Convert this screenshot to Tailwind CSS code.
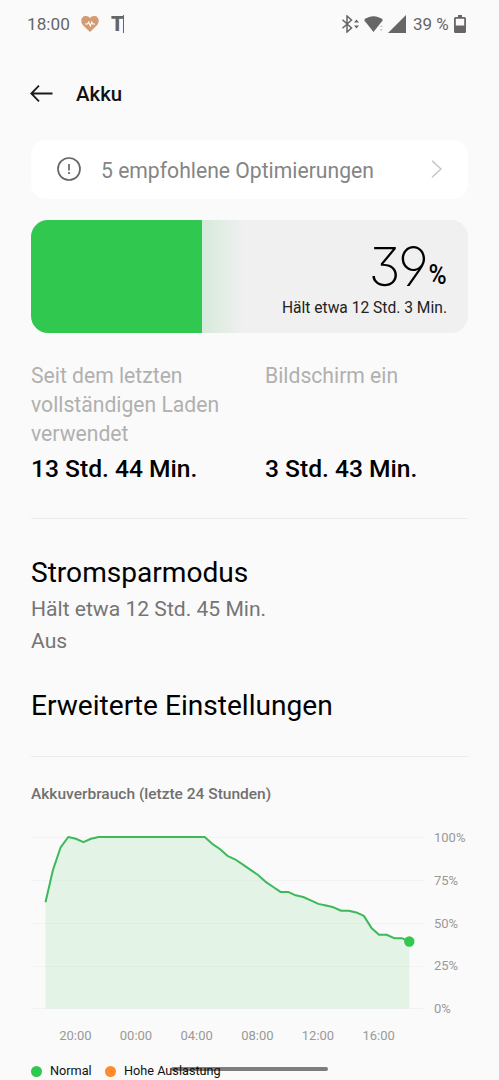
<!DOCTYPE html>
<html lang="de">
<head>
    <meta charset="UTF-8">
    <meta name="viewport" content="width=device-width, initial-scale=1.0">
    <title>Akku</title>
    <script src="https://cdn.jsdelivr.net/npm/@tailwindcss/browser@4"></script>
</head>
<body class="bg-[#fafafa] font-['Roboto',sans-serif] text-black">
<div class="relative w-[499px] h-[1080px] overflow-hidden flex flex-col">

    <!-- Status bar -->
    <header class="h-12 shrink-0 flex items-center pl-[27px] pr-[33px] text-[#666]">
        <span class="text-[17.2px] w-[54px] whitespace-nowrap pt-px">18:00</span>
        <svg class="w-[18px] h-4" viewBox="0 0 18 16">
            <path d="M9 16 2 9.2C-1.5 5 .7 0 4.8 0 6.6 0 8.200.9 9 2.300 9.800.9 11.400 0 13.200 0c4.100 0 6.300 5 2.800 9.200Z" fill="#d49b72"/>
            <path d="M4 8h2.500l1.200-2 1.600 4 1.500-4 .8 2H14" fill="none" stroke="#fff" stroke-width="1.100"/>
        </svg>
        <span class="ml-3 w-[13px] h-[18px] flex items-center border-r border-[#666] text-[20px] font-black leading-none">T</span>
        <div class="ml-auto flex items-center">
            <svg class="w-[19px] h-[18px]" viewBox="0 0 19 18" fill="none" stroke="#666" stroke-width="1.500">
                <path d="m1.500 4.800 9 8.200-4.500 4V1l4.500 4-9 8.200"/>
                <path d="m13 7.500 2.500-3 2.500 3Zm0 3 2.500 3 2.500-3Z" fill="#666" stroke="none"/>
            </svg>
            <svg class="ml-1 w-[20px] h-4" viewBox="0 0 20 16">
                <path d="M0 4C5.500-.9 13.500-.9 19 4L9.500 16Z" fill="#666"/>
                <path d="m15.500 11 1.700-2 1.700 2Zm0 2 1.700 2 1.700-2Z" fill="#ccc"/>
            </svg>
            <svg class="ml-1 w-[18px] h-[18px]" viewBox="0 0 18 18"><path d="M18 0v18H0Z" fill="#666"/></svg>
            <span class="ml-[7px] w-[41px] text-[17px] whitespace-nowrap pt-px">39 %</span>
            <svg class="w-3 h-[18px]" viewBox="0 0 12 18">
                <path d="M4 0h4v2h2.500Q12 2 12 3.500v13q0 1.500-1.500 1.500h-9Q0 18 0 16.500v-13Q0 2 1.500 2H4ZM1.800 3.800v6.700h8.400V3.800Z" fill="#666" fill-rule="evenodd"/>
            </svg>
        </div>
    </header>

    <!-- Title bar -->
    <div class="h-[92px] shrink-0 flex items-center pl-[30px] pb-[2px]">
        <svg class="w-[23px] h-[17px]" viewBox="0 0 23 17" fill="none" stroke="#1a1a1a" stroke-width="1.800">
            <path d="M22.500 8.500H1.300M9 .7 1.300 8.500 9 16.300"/>
        </svg>
        <h1 class="ml-[23px] text-[20.4px] font-medium text-[#111] pt-[3px]">Akku</h1>
    </div>

    <main class="px-[31px] flex flex-col">
        <div class="h-[59px] w-[437px] rounded-[15px] bg-white flex items-center pl-[26px] pr-[26px]">
            <svg class="w-6 h-6 mb-[2px]" viewBox="0 0 24 24" fill="none" stroke="#666" stroke-width="1.700">
                <circle cx="12" cy="12" r="11"/>
                <path d="M12 7v6.500M12 15v2"/>
            </svg>
            <span class="ml-[20px] text-[21.150px] text-[#858585] whitespace-nowrap pt-[2px]">5 empfohlene Optimierungen</span>
            <svg class="ml-auto w-[11px] h-[18px] mb-px" viewBox="0 0 11 18" fill="none" stroke="#c4c4c4" stroke-width="1.500">
                <path d="m1 .8 9 8.200-9 8.200"/>
            </svg>
        </div>

        <!-- Charge level -->
        <div class="mt-[21px] h-[113px] w-[437px] rounded-[17px] overflow-hidden bg-[#f0f0f0] flex">
            <div class="w-[170.500px] bg-[#30c84f]"></div>
            <div class="w-[42px] bg-linear-to-r from-[#d5eada] to-[#f0f0f0]"></div>
            <div class="flex-1 pr-[21px] flex flex-col items-end">
                <div class="mt-[19px] h-[58px] flex items-baseline leading-[56px]">
                    <span class="font-['Inter'] font-extralight text-[54px] tracking-[-2.500px] [font-feature-settings:'cv09','cv04','ss01']">39</span>
                    <span class="font-medium text-[28px] origin-right scale-x-[.88] pb-[2px] -translate-y-[2px]">%</span>
                </div>
                <span class="text-[15.600px] leading-[22px] text-[#222] whitespace-nowrap">Hält etwa 12 Std. 3 Min.</span>
            </div>
        </div>

        <div class="mt-[28px] h-[158px] flex border-b border-[#ececec]">
            <div class="w-[234px]">
                <p class="h-[87px] text-[21.150px] leading-[29px] text-[#b0b0b0]">Seit dem letzten<br>vollständigen Laden<br>verwendet</p>
                <p class="mt-[6px] text-[24.600px] leading-[30px] font-medium whitespace-nowrap">13 Std. 44 Min.</p>
            </div>
            <div>
                <p class="h-[87px] text-[21.150px] leading-[29px] text-[#b0b0b0]">Bildschirm ein</p>
                <p class="mt-[6px] text-[24.600px] leading-[30px] font-medium whitespace-nowrap">3 Std. 43 Min.</p>
            </div>
        </div>

        <div class="h-[238px] border-b border-[#ececec] pt-[35px]">
            <h2 class="text-[28.100px] leading-[38px]">Stromsparmodus</h2>
            <p class="pt-px text-[21.100px] leading-[32px] text-[#757575]">Hält etwa 12 Std. 45 Min.<br>Aus</p>
            <h2 class="mt-[30px] text-[28.100px] leading-[38px]">Erweiterte Einstellungen</h2>
        </div>

        <h3 class="mt-[27px] text-[15.500px] leading-[20px] font-medium text-[#707070]">Akkuverbrauch (letzte 24 Stunden)</h3>

        <!-- Chart -->
        <div class="mt-[21px] h-[190px] flex">
            <svg class="w-[393px] h-[190px] shrink-0" viewBox="31 825 393 190">
                <path d="M31 837.500H424M31 880.500H424M31 923.500H424M31 966.500H424M31 1008.500H424" stroke="#f3f3f3"/>
                <polygon id="area" fill="#30c84f" fill-opacity=".11"/>
                <polyline id="line" fill="none" stroke="#3cb95a" stroke-width="2" stroke-linejoin="round"/>
                <circle cx="409.300" cy="941.500" r="5.200" fill="#30c84f"/>
            </svg>
            <div class="pl-[10px] pt-[3px] h-[190px] flex flex-col gap-[22.800px] text-[13px] leading-[20px] text-[#999]">
                <span>100%</span><span>75%</span><span>50%</span><span>25%</span><span>0%</span>
            </div>
        </div>
        <div class="mt-[11px] ml-[14px] w-[364px] grid grid-cols-6 text-center text-[13px] leading-[20px] text-[#999]">
            <span>20:00</span><span>00:00</span><span>04:00</span><span>08:00</span><span>12:00</span><span>16:00</span>
        </div>
        <div class="mt-[15px] flex items-center text-[12.700px] leading-[20px] text-[#111]">
            <span class="w-[11px] h-[11px] rounded-full bg-[#30c84f]"></span>
            <span class="ml-[8px] w-[55px]">Normal</span>
            <span class="w-[11px] h-[11px] rounded-full bg-[#ff8a30]"></span>
            <span class="ml-[8px] whitespace-nowrap">Hohe Auslastung</span>
        </div>
    </main>

    <!-- Gesture bar -->
    <div class="absolute left-[171px] top-[1067px] w-[157px] h-1 rounded-full bg-black/50"></div>
</div>

<script>
    // battery level every 30 minutes, starting at 18:00
    var levels = [62, 81, 94, 100, 99, 97, 99, 100, 100, 100, 100, 100, 100, 100, 100, 100, 100, 100, 100, 100, 100, 100,
        96, 93, 89, 87, 84, 81, 78, 74, 71, 68, 68, 66, 65, 63, 61, 60, 59, 57, 57, 56, 54, 47, 43, 43, 41, 41, 39];

    var points = levels.map(function(level, i) {
        return (45.5 + i * 7.58) + "," + (1008.5 - level * 1.715);
    }).join(" ");

    document.getElementById("line").setAttribute("points", points);
    document.getElementById("area").setAttribute("points", points + " 409.3,1008.5 45.5,1008.5");
</script>
</body>
</html>
